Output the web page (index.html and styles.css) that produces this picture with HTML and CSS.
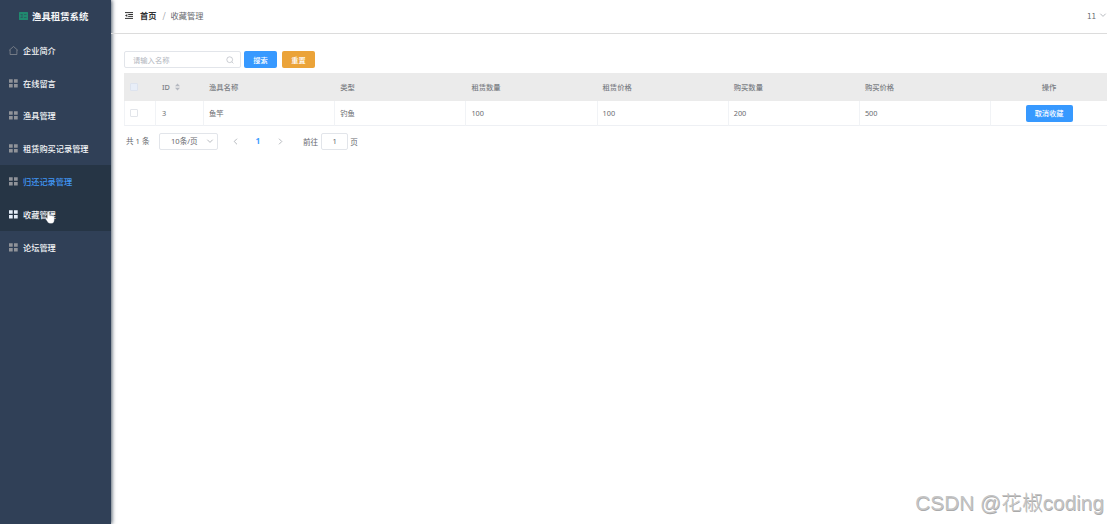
FILE: index.html
```
<!DOCTYPE html>
<html lang="zh-CN">
<head>
  <meta charset="UTF-8">
  <meta name="viewport" content="width=device-width, initial-scale=1.0">
  <title>渔具租赁系统</title>
  <link rel="stylesheet" href="styles.css">
</head>
<body>
  <svg width="0" height="0" class="defs">
    <symbol id="grid" viewBox="0 0 9 9">
      <path d="M0 0.3h3.7v3.5H0zM5 0.3h3.7v3.5H5zM0 5.1h3.7v3.5H0zM5 5.1h3.7v3.5H5z" fill="currentColor"/>
    </symbol>
    <symbol id="down" viewBox="0 0 8 8">
      <path d="M1.3 2.7l2.7 2.7 2.7-2.7" fill="none" stroke="currentColor" stroke-width="0.8"/>
    </symbol>
  </svg>

  <aside class="sidebar">
    <div class="logo">
      <svg width="9" height="8" viewBox="0 0 9 8"><rect width="9" height="8" rx="0.5" fill="#20896f"/><path d="M1.5 2.5h2M1.5 5.5h2M3 2v4M5 2.5h2.5M5 5.5h2.5" stroke="#2b5b60" stroke-width="0.8" fill="none"/></svg>
      <span>渔具租赁系统</span>
    </div>
    <ul class="menu">
      <li class="menu-item"><svg class="menu-icon" viewBox="0 0 9 9"><path d="M0.2 4.3L4.5 0.5l4.3 3.8M1.1 3.8v4.7h6.8V3.8" fill="none" stroke="currentColor" stroke-width="0.7"/></svg><span>企业简介</span></li>
      <li class="menu-item"><svg class="menu-icon"><use href="#grid"/></svg><span>在线留言</span></li>
      <li class="menu-item"><svg class="menu-icon"><use href="#grid"/></svg><span>渔具管理</span></li>
      <li class="menu-item"><svg class="menu-icon"><use href="#grid"/></svg><span>租赁购买记录管理</span></li>
      <li class="menu-item active"><svg class="menu-icon"><use href="#grid"/></svg><span>归还记录管理</span></li>
      <li class="menu-item hover"><svg class="menu-icon"><use href="#grid"/></svg><span>收藏管理</span>
        <svg class="cursor" width="10" height="13" viewBox="0 0 10 13"><path d="M2.2 7.4V1.5c0-1.4 2-1.4 2 0v2.8c.6-.5 1.4-.3 1.6.2.6-.4 1.4-.2 1.6.4.9-.4 2 .1 2 1.1v2.7c0 2.2-1 3.8-3 3.8H5c-1.2 0-2-.8-2.6-1.7L.5 8c-.7-1.1.6-2 1.7-.6z" fill="#fff" stroke="#273443" stroke-width="0.3"/></svg>
      </li>
      <li class="menu-item"><svg class="menu-icon"><use href="#grid"/></svg><span>论坛管理</span></li>
    </ul>
  </aside>

  <div class="main">
    <header class="header">
      <svg class="fold" width="8" height="7" viewBox="0 0 8 7"><path d="M0 .6h8M3.2 2.5H8M3.2 4.4H8M0 6.4h8" stroke="#333" stroke-width="1" fill="none"/><path d="M0 3.5L2.3 2v3z" fill="#333"/></svg>
      <b class="home">首页</b>
      <span class="slash">/</span>
      <span class="current">收藏管理</span>
      <span class="user">11 <svg width="8" height="8"><use href="#down"/></svg></span>
    </header>

    <div class="content">
      <div class="search">
        <div class="input">
          <span>请输入名称</span>
          <svg width="8" height="8" viewBox="0 0 8 8"><circle cx="3.7" cy="3.7" r="2.9" fill="none" stroke="#b6bac2" stroke-width="0.7"/><path d="M5.8 5.8L7.4 7.4" stroke="#b6bac2" stroke-width="0.7"/></svg>
        </div>
        <button class="btn primary">搜索</button>
        <button class="btn warning">重置</button>
      </div>

      <table class="table">
        <colgroup>
          <col class="col-check"><col class="col-id"><col class="col"><col class="col"><col class="col"><col class="col"><col class="col"><col class="col"><col>
        </colgroup>
        <thead>
          <tr>
            <th><i class="checkbox"></i></th>
            <th><span class="sort">ID <svg width="5" height="8" viewBox="0 0 5 8"><path d="M0 3.2L2.5.5 5 3.2zM0 4.8h5L2.5 7.5z" fill="#b4b8c0"/></svg></span></th>
            <th>渔具名称</th>
            <th>类型</th>
            <th>租赁数量</th>
            <th>租赁价格</th>
            <th>购买数量</th>
            <th>购买价格</th>
            <th class="action">操作</th>
          </tr>
        </thead>
        <tbody>
          <tr>
            <td><i class="checkbox"></i></td>
            <td>3</td>
            <td>鱼竿</td>
            <td>钓鱼</td>
            <td>100</td>
            <td>100</td>
            <td>200</td>
            <td>500</td>
            <td class="action"><button class="btn primary cancel">取消收藏</button></td>
          </tr>
        </tbody>
      </table>

      <div class="pagination">
        <span class="total">共 1 条</span>
        <span class="size">10条/页<svg width="8" height="8"><use href="#down"/></svg></span>
        <svg class="arrow" width="5" height="7" viewBox="0 0 5 7"><path d="M4 .7L1.2 3.5 4 6.3" fill="none" stroke="#a4a8ae" stroke-width="0.8"/></svg>
        <b class="page">1</b>
        <svg class="arrow" width="5" height="7" viewBox="0 0 5 7"><path d="M1 .7l2.8 2.8L1 6.3" fill="none" stroke="#a4a8ae" stroke-width="0.8"/></svg>
        <span class="jump">前往<span class="jump-input">1</span>页</span>
      </div>
    </div>
  </div>

  <div class="watermark">CSDN @花椒coding</div>
</body>
</html>
```
FILE: styles.css
```
* {
  box-sizing: border-box;
}

body {
  margin: 0;
  height: 524px;
  display: flex;
  overflow: hidden;
  background: #fff;
  color: #686a6f;
  font-family: "Noto Sans", "Noto Sans CJK SC", sans-serif;
  font-size: 7.3px;
}

svg {
  display: block;
  flex: none;
}

.defs {
  position: absolute;
}

.sidebar {
  width: 111px;
  flex: none;
  background: #304057;
  color: #f4f6f8;
  box-shadow: 1px 0 4px rgba(0, 21, 41, 0.7);
}

.logo {
  height: 34px;
  padding: 0 0 2px 19px;
  display: flex;
  align-items: center;
  gap: 4px;
  font-family: "Noto Sans CJK SC", sans-serif;
  font-size: 9.4px;
  font-weight: bold;
  white-space: nowrap;
}

.menu {
  list-style: none;
  margin: 0;
  padding: 0;
}

.menu-item {
  position: relative;
  height: 32.8px;
  padding-left: 9px;
  display: flex;
  align-items: center;
  gap: 5px;
  font-family: "Noto Sans CJK SC", sans-serif;
  font-size: 8.2px;
  font-weight: 500;
  white-space: nowrap;
}

.menu-item span {
  padding-bottom: 1px;
}

.menu-icon {
  width: 9px;
  height: 9px;
  color: #909399;
}

.active,
.hover {
  background: #263545;
}

.active {
  color: #4197f5;
}

.hover .menu-icon {
  color: #e4edf8;
}

.cursor {
  position: absolute;
  left: 45px;
  top: 13px;
}

.main {
  flex: 1;
  min-width: 0;
}

.header {
  height: 34px;
  padding: 0 0 3px 14px;
  border-bottom: 1px solid #dcdcdc;
  display: flex;
  align-items: center;
  font-family: "Noto Sans CJK SC", sans-serif;
  font-size: 8.2px;
}

.home {
  margin-left: 7px;
  color: #303133;
}

.slash {
  margin: 0 5px 0 6px;
  color: #909399;
}

.user {
  margin-left: auto;
  display: flex;
  align-items: center;
  gap: 3px;
}

.content {
  padding: 17px 0 0 13px;
}

.search {
  display: flex;
  height: 17px;
}

.input {
  width: 117px;
  margin-right: 3px;
  padding: 0 6px 0 8px;
  border: 1px solid #e2e5ea;
  border-radius: 2px;
  display: flex;
  align-items: center;
  justify-content: space-between;
  color: #b2b6be;
}

.btn {
  width: 33px;
  height: 17px;
  padding: 0;
  border: none;
  border-radius: 2px;
  color: #fff;
  font-family: "Noto Sans CJK SC", sans-serif;
  font-size: 7.2px;
  font-weight: 500;
  line-height: 16px;
}

.primary {
  background: #3799ff;
}

.warning {
  margin-left: 5px;
  background: #eba338;
}

.table {
  width: 100%;
  margin-top: 5px;
  table-layout: fixed;
  border-collapse: separate;
  border-spacing: 0;
}

.col-check {
  width: 32px;
}

.col-id {
  width: 48px;
}

.col {
  width: 131.2px;
}

.table th,
.table td {
  padding: 0 0 0 5px;
  text-align: left;
}

.table th:nth-child(-n+2),
.table td:nth-child(-n+2) {
  padding-left: 6px;
}

.table th {
  height: 28px;
  background: #ebebeb;
  color: #7c7f85;
  font-weight: 500;
}

.table td {
  height: 25px;
  border-right: 1px solid #f1f3f6;
  border-bottom: 1px solid #eef0f4;
}

.table td:first-child {
  padding-left: 5px;
  border-left: 1px solid #f1f3f6;
}

.table .action {
  padding: 0;
  border-right: none;
  text-align: center;
}

.cancel {
  width: 47px;
}

.checkbox {
  display: block;
  width: 8px;
  height: 8px;
  border: 1px solid #e2e5ea;
  border-radius: 1px;
  background: #fff;
}

th .checkbox {
  border-color: #dde3ee;
  background: #e8eef8;
}

.sort {
  display: flex;
  align-items: center;
  gap: 5px;
}

.pagination {
  height: 17px;
  margin-top: 7px;
  padding-left: 2px;
  display: flex;
  align-items: center;
  font-size: 7.6px;
}

.total {
  width: 33px;
  padding-bottom: 2px;
}

.size {
  width: 59px;
  height: 17px;
  margin-right: 15px;
  padding: 0 3px 2px 11px;
  border: 1px solid #e2e5ea;
  border-radius: 2px;
  display: flex;
  align-items: center;
  justify-content: space-between;
}

.size svg,
.user svg {
  color: #a4a8ae;
}

.page {
  width: 40px;
  padding-bottom: 2px;
  color: #409eff;
  font-size: 8.4px;
  text-align: center;
}

.jump {
  margin-left: 20px;
  padding-bottom: 1px;
  display: flex;
  align-items: center;
}

.jump-input {
  width: 27px;
  height: 17px;
  margin: 1px 2px 0 3px;
  border: 1px solid #e2e5ea;
  border-radius: 2px;
  line-height: 15px;
  text-align: center;
}

/* bottom right mark over the page */
.watermark {
  position: absolute;
  right: 3px;
  bottom: 7px;
  color: #c4c4c4;
  font-family: "Liberation Sans", "Noto Sans CJK SC", sans-serif;
  font-size: 20.8px;
  font-weight: 300;
  line-height: 28px;
  text-shadow: 0.5px 0.5px 0 #aaa;
  white-space: nowrap;
}
```
